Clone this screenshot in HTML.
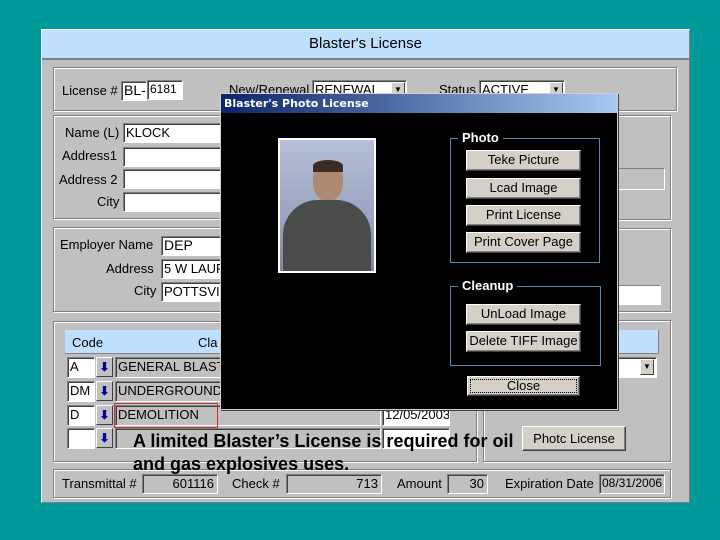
<!DOCTYPE html>
<html><head><meta charset="utf-8"><style>
*{box-sizing:border-box;margin:0;padding:0}
body{width:720px;height:540px;background:#009999;position:relative;overflow:hidden;font-family:"Liberation Sans",Arial,sans-serif;font-size:13px;color:#000}
.a{position:absolute}
.grp{position:absolute;border:1px solid #808080;box-shadow:inset 1px 1px 0 #fff,1px 1px 0 #fff}
.f{position:absolute;background:#fff;border:1px solid;border-color:#808080 #fff #fff #808080;box-shadow:inset 1px 1px 0 #404040;font-size:13px;line-height:17px;padding-left:2px;white-space:nowrap;overflow:hidden}
.g{background:#c0c0c0}
.lbl{position:absolute;font-size:13px;white-space:nowrap}
.btn{position:absolute;background:#d4d0c8;border:1px solid;border-color:#fff #404040 #404040 #fff;box-shadow:inset -1px -1px 0 #808080;text-align:center;font-size:13px;line-height:18px;white-space:nowrap}
.arr{position:absolute;width:17px;height:20px;background:#c0c0c0;border:1px solid;border-color:#fff #404040 #404040 #fff;color:#0000a0;font-weight:bold;font-size:12px;text-align:center;line-height:18px}
.dd{position:absolute;width:14px;height:16px;background:#d4d0c8;border:1px solid;border-color:#fff #404040 #404040 #fff;font-size:8px;text-align:center;line-height:14px}
</style></head><body>
<div class="a" style="left:41px;top:29px;width:649px;height:474px;background:#c0c0c0;border:1px solid #fff;border-right-color:#808080;border-bottom-color:#808080"></div>
<div class="a" style="left:42px;top:30px;width:647px;height:30px;background:#bfdfff;border-bottom:2px solid #808080;text-align:center;font-size:15px;line-height:28px">Blaster's License</div>

<div class="grp" style="left:53px;top:67px;width:624px;height:44px"></div>
<div class="lbl" style="left:62px;top:83px">License #</div>
<div class="f" style="left:121px;top:81px;width:26px;height:20px;font-size:14px">BL-</div>
<div class="f" style="left:147px;top:80px;width:36px;height:20px;font-size:12px">6181</div>
<div class="lbl" style="left:229px;top:82px">New/Renewal</div>
<div class="f" style="left:312px;top:80px;width:95px;height:20px">RENEWAL</div>
<div class="dd" style="left:391px;top:82px">▼</div>
<div class="lbl" style="left:439px;top:82px">Status</div>
<div class="f" style="left:479px;top:80px;width:86px;height:20px">ACTIVE</div>
<div class="dd" style="left:549px;top:82px">▼</div>

<div class="grp" style="left:53px;top:115px;width:424px;height:104px"></div>
<div class="grp" style="left:483px;top:115px;width:188px;height:105px"></div>
<div class="lbl" style="left:65px;top:125px">Name (L)</div>
<div class="f" style="left:123px;top:123px;width:100px;height:20px">KLOCK</div>
<div class="lbl" style="left:62px;top:148px">Address1</div>
<div class="f" style="left:123px;top:147px;width:100px;height:20px"></div>
<div class="lbl" style="left:59px;top:172px">Address 2</div>
<div class="f" style="left:123px;top:169px;width:100px;height:20px"></div>
<div class="lbl" style="left:97px;top:194px">City</div>
<div class="f" style="left:123px;top:192px;width:100px;height:20px"></div>
<div class="f g" style="left:600px;top:168px;width:65px;height:22px;box-shadow:none"></div>

<div class="grp" style="left:53px;top:227px;width:424px;height:85px"></div>
<div class="grp" style="left:483px;top:228px;width:188px;height:84px"></div>
<div class="lbl" style="left:60px;top:237px">Employer Name</div>
<div class="f" style="left:161px;top:236px;width:62px;height:20px;font-size:14px">DEP</div>
<div class="lbl" style="left:106px;top:261px">Address</div>
<div class="f" style="left:161px;top:259px;width:62px;height:20px">5 W LAUREL</div>
<div class="lbl" style="left:134px;top:283px">City</div>
<div class="f" style="left:161px;top:282px;width:62px;height:20px">POTTSVILLE</div>
<div class="f" style="left:600px;top:285px;width:61px;height:20px;box-shadow:none"></div>

<div class="grp" style="left:53px;top:321px;width:424px;height:141px"></div>
<div class="grp" style="left:483px;top:320px;width:188px;height:142px"></div>
<div class="a" style="left:65px;top:330px;width:594px;height:24px;background:#bfdfff;border-bottom:1px solid #808080;border-right:1px solid #808080"></div>
<div class="lbl" style="left:72px;top:335px">Code</div>
<div class="lbl" style="left:198px;top:335px">Cla</div>
<div class="f" style="left:483px;top:357px;width:174px;height:21px"></div>
<div class="dd" style="left:640px;top:359px">▼</div>

<div class="f" style="left:67px;top:357px;width:28px;height:21px">A</div>
<div class="arr" style="left:96px;top:357px">⬇</div>
<div class="f g" style="left:115px;top:357px;width:266px;height:21px">GENERAL BLASTER</div>
<div class="f" style="left:67px;top:381px;width:28px;height:21px">DM</div>
<div class="arr" style="left:96px;top:381px">⬇</div>
<div class="f g" style="left:115px;top:381px;width:266px;height:21px">UNDERGROUND</div>
<div class="f" style="left:67px;top:405px;width:28px;height:21px">D</div>
<div class="arr" style="left:96px;top:405px">⬇</div>
<div class="f g" style="left:115px;top:405px;width:266px;height:21px">DEMOLITION</div>
<div class="a" style="left:114px;top:403px;width:104px;height:25px;border:1px solid #d03030"></div>
<div class="f" style="left:382px;top:405px;width:68px;height:21px">12/05/2003</div>
<div class="f" style="left:67px;top:428px;width:28px;height:21px"></div>
<div class="arr" style="left:96px;top:428px">⬇</div>
<div class="f g" style="left:115px;top:428px;width:266px;height:21px"></div>
<div class="f" style="left:382px;top:428px;width:68px;height:21px"></div>
<div class="btn" style="left:522px;top:426px;width:104px;height:25px;line-height:23px">Photc License</div>

<div class="grp" style="left:53px;top:469px;width:618px;height:29px"></div>
<div class="lbl" style="left:62px;top:476px">Transmittal #</div>
<div class="f g" style="left:142px;top:474px;width:76px;height:20px;text-align:right;padding-right:3px">601116</div>
<div class="lbl" style="left:232px;top:476px">Check #</div>
<div class="f g" style="left:286px;top:474px;width:96px;height:20px;text-align:right;padding-right:3px">713</div>
<div class="lbl" style="left:397px;top:476px">Amount</div>
<div class="f g" style="left:447px;top:474px;width:41px;height:20px;text-align:right;padding-right:3px">30</div>
<div class="lbl" style="left:505px;top:476px">Expiration Date</div>
<div class="f g" style="left:599px;top:474px;width:66px;height:20px;font-size:12px">08/31/2006</div>

<!-- dialog -->
<div class="a" style="left:220px;top:93px;width:398px;height:317px;background:#000;border:1px solid #d4d0c8;box-shadow:1px 1px 0 #404040"></div>
<div class="a" style="left:221px;top:94px;width:396px;height:19px;background:linear-gradient(90deg,#0a246a,#a6caf0);color:#fff;font-weight:bold;font-size:11px;line-height:19px;padding-left:3px;font-family:'DejaVu Sans',sans-serif">Blaster's Photo License</div>
<div class="a" style="left:278px;top:138px;width:98px;height:135px;border:2px solid #fff;background:linear-gradient(#b8bfd8,#9aa3c0 60%,#7f8696)">
 <div class="a" style="left:33px;top:21px;width:30px;height:40px;border-radius:45%;background:#b08a70"></div>
 <div class="a" style="left:33px;top:20px;width:30px;height:12px;border-radius:50% 50% 0 0;background:#3a2c26"></div>
 <div class="a" style="left:3px;top:60px;width:88px;height:71px;border-radius:35px 35px 0 0;background:#4a4c4a"></div>
</div>
<div class="a" style="left:450px;top:138px;width:150px;height:125px;border:1px solid #5a8ab0"></div>
<div class="a" style="left:458px;top:130px;background:#000;color:#fff;font-weight:bold;font-size:13px;padding:0 4px">Photo</div>
<div class="btn" style="left:466px;top:150px;width:115px;height:21px">Teke Picture</div>
<div class="btn" style="left:466px;top:178px;width:115px;height:21px">Lcad Image</div>
<div class="btn" style="left:466px;top:205px;width:115px;height:21px">Print License</div>
<div class="btn" style="left:466px;top:232px;width:115px;height:21px">Print Cover Page</div>
<div class="a" style="left:450px;top:286px;width:151px;height:80px;border:1px solid #5a8ab0"></div>
<div class="a" style="left:458px;top:278px;background:#000;color:#fff;font-weight:bold;font-size:13px;padding:0 4px">Cleanup</div>
<div class="btn" style="left:466px;top:304px;width:115px;height:21px">UnLoad Image</div>
<div class="btn" style="left:466px;top:331px;width:115px;height:21px">Delete TIFF Image</div>
<div class="btn" style="left:467px;top:376px;width:113px;height:20px;outline:1px dotted #000;outline-offset:-4px">Close</div>

<div class="a" style="left:133px;top:430px;font-weight:bold;font-size:18px;line-height:23px;white-space:nowrap">A limited Blaster’s License is required for oil<br>and gas explosives uses.</div>
</body></html>
